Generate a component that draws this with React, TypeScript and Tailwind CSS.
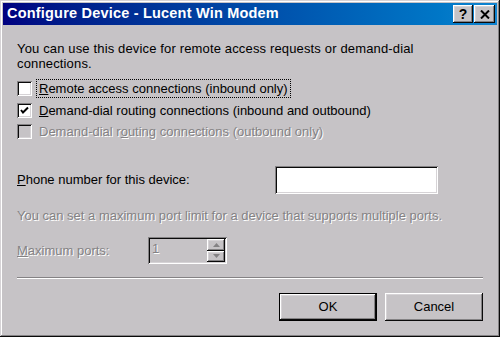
const sunken =
  "shadow-[inset_1px_1px_0_#848284,inset_-1px_-1px_0_#ffffff,inset_2px_2px_0_#0a0a0a,inset_-2px_-2px_0_#d6d3d6]";
const raised =
  "shadow-[inset_-1px_-1px_0_#0a0a0a,inset_1px_1px_0_#ffffff,inset_-2px_-2px_0_#848284,inset_2px_2px_0_#d6d3d6]";
const disabledText = "text-[#848284] [text-shadow:1px_1px_0_#ffffff]";

function CheckBox({ checked, disabled }: { checked?: boolean; disabled?: boolean }) {
  return (
    <div
      className={`w-[15px] h-[15px] shrink-0 flex items-center justify-center ${sunken} ${
        disabled ? "bg-[#c6c3c6]" : "bg-white"
      }`}
    >
      {checked && (
        <svg width="9" height="9" viewBox="0 0 9 9">
          <path d="M1 4 L3 6.5 L8 1.5" stroke="#000" strokeWidth="2" fill="none" />
        </svg>
      )}
    </div>
  );
}

function Row({
  children,
  checked,
  disabled,
  focused,
  className,
}: {
  children: React.ReactNode;
  checked?: boolean;
  disabled?: boolean;
  focused?: boolean;
  className?: string;
}) {
  return (
    <div className={`flex items-center h-[21px] ${className ?? ""}`}>
      <CheckBox checked={checked} disabled={disabled} />
      <span
        className={`ml-[4px] px-[2px] leading-[17px] border ${
          focused ? "border-dotted border-black" : "border-transparent"
        } ${disabled ? disabledText : "text-black"}`}
      >
        {children}
      </span>
    </div>
  );
}

export default function App() {
  return (
    <div
      className="w-[500px] h-[337px] bg-[#c6c3c6] p-[3px] overflow-hidden shadow-[inset_-1px_-1px_0_#0a0a0a,inset_1px_1px_0_#d6d3d6,inset_-2px_-2px_0_#848284,inset_2px_2px_0_#ffffff]"
      style={{ fontFamily: '"Liberation Sans", Arial, sans-serif' }}
    >
      {/* title bar */}
      <div className="h-[22px] flex items-center justify-between bg-gradient-to-r from-[#000080] to-[#1084d0] pl-[4px] pr-[2px]">
        <span className="text-white font-bold text-[14.5px] tracking-[0.2px]">
          Configure Device - Lucent Win Modem
        </span>
        <div className="flex gap-[1px]">
          <div className={`w-[20px] h-[18px] bg-[#c6c3c6] flex items-center justify-center ${raised}`}>
            <span className="font-bold text-[14px] leading-none text-black">?</span>
          </div>
          <div className={`w-[21px] h-[18px] bg-[#c6c3c6] flex items-center justify-center ${raised}`}>
            <svg width="10" height="9" viewBox="0 0 10 9">
              <path d="M1 0.5 L9 8.5 M9 0.5 L1 8.5" stroke="#000" strokeWidth="2" />
            </svg>
          </div>
        </div>
      </div>

      <div className="px-[14px] text-[13px] text-black">
        <p className="mt-[16px] leading-[15px] w-[420px] tracking-[0.15px]">
          You can use this device for remote access requests or demand-dial connections.
        </p>

        <Row className="mt-[7px]" focused>
          <span className="underline">R</span>emote access connections (inbound only)
        </Row>
        <Row className="mt-[1px]" checked>
          <span className="underline">D</span>emand-dial routing connections (inbound and outbound)
        </Row>
        <Row disabled>
          Demand-dial r<span className="underline">o</span>uting connections (outbound only)
        </Row>

        <div className="mt-[24px] flex items-center h-[28px]">
          <span className="w-[258px]">
            <span className="underline">P</span>hone number for this device:
          </span>
          <div className={`w-[163px] h-[28px] bg-white ${sunken}`} />
        </div>

        <p className={`mt-[14px] leading-[15px] ${disabledText}`}>
          You can set a maximum port limit for a device that supports multiple ports.
        </p>

        <div className="mt-[14px] flex items-center h-[27px]">
          <span className={`w-[131px] ${disabledText}`}>
            <span className="underline">M</span>aximum ports:
          </span>
          <div className={`w-[79px] h-[27px] bg-[#c6c3c6] flex p-[2px] ${sunken}`}>
            <span className={`flex-1 pl-[2px] leading-[20px] ${disabledText}`}>1</span>
            <div className="w-[18px] flex flex-col">
              <div className={`flex-1 flex items-center justify-center ${raised}`}>
                <svg width="7" height="4" viewBox="0 0 7 4">
                  <path d="M3.5 0 L7 4 L0 4 Z" fill="#848284" />
                </svg>
              </div>
              <div className={`flex-1 flex items-center justify-center ${raised}`}>
                <svg width="7" height="4" viewBox="0 0 7 4">
                  <path d="M0 0 L7 0 L3.5 4 Z" fill="#848284" />
                </svg>
              </div>
            </div>
          </div>
        </div>

        <div className="mt-[13px] h-[2px] border-t border-t-[#848284] border-b border-b-white" />

        <div className="mt-[14px] flex justify-end gap-[8px]">
          <button className="w-[98px] h-[28px] bg-[#c6c3c6] border border-black flex items-center justify-center">
            <span className={`w-full h-full flex items-center justify-center ${raised}`}>OK</span>
          </button>
          <button className={`w-[98px] h-[28px] bg-[#c6c3c6] flex items-center justify-center ${raised}`}>
            Cancel
          </button>
        </div>
      </div>
    </div>
  );
}
